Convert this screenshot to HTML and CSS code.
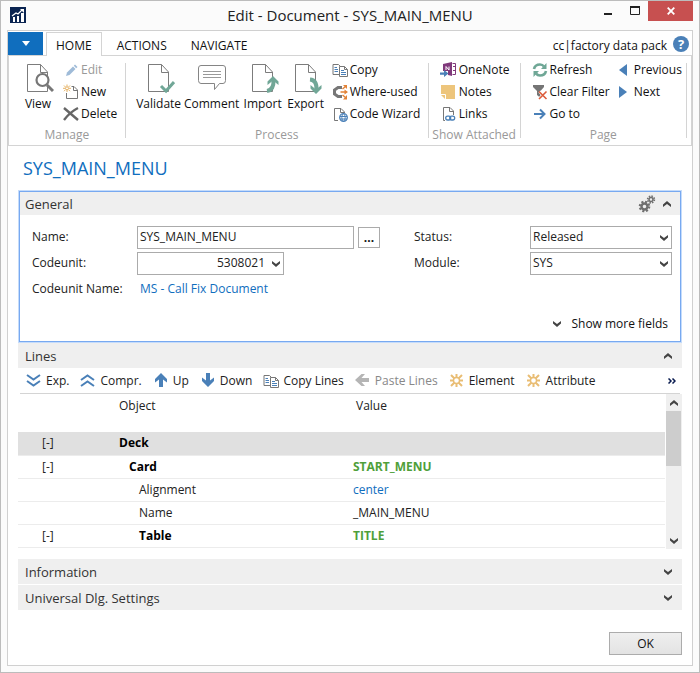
FILE: index.html
```html
<!DOCTYPE html>
<html lang="en">
<head>
<meta charset="utf-8">
<title>Edit - Document - SYS_MAIN_MENU</title>
<link rel="stylesheet" href="styles.css">
</head>
<body>
<svg class="defs" aria-hidden="true">
  <symbol id="doc" viewBox="0 0 32 32"><path d="M5.5 2.500H18.500L25.500 10V29.500H5.500ZM18.500 2.500V10.500H25.500" fill="#fff" stroke="#7c7c7c"/></symbol>
  <symbol id="copy" viewBox="0 0 16 16"><path d="M1 2.500H6.500L9 5V12.500H1Z" fill="#fff" stroke="#777"/><path d="M2.500 5.500H5M2.500 7.500H6M2.500 9.500H6" stroke="#4a80b8"/><path d="M7.500 4.500H12.500L15.500 7.500V14.500H7.500Z" fill="#fff" stroke="#777"/><path d="M12.500 4.500V7.500H15.500" fill="none" stroke="#777"/><path d="M9 8.500H12M9 10.500H14M9 12.500H14" stroke="#4a80b8"/></symbol>
  <symbol id="down" viewBox="0 0 8 6"><path d="M0 0L4 3L8 0V2.500L4 6L0 2.500Z" fill="#444"/></symbol>
  <symbol id="up" viewBox="0 0 8 6"><path d="M0 6L4 3L8 6V3.500L4 0L0 3.500Z" fill="#444"/></symbol>
  <symbol id="burst" viewBox="0 0 16 16"><path d="M7.500 1V5M7.500 10V14M1 7.500H5M10 7.500H14M2 2L5.500 5.500M13 2L9.500 5.500M2 13L5.500 9.500M13 13L9.500 9.500" stroke="#e9bd74" stroke-width="2"/><circle cx="7.500" cy="7.500" r="3" fill="#fff" stroke="#e9bd74" stroke-width="1.400"/></symbol>
</svg>
<div class="window">
  <header class="titlebar">
    <svg class="app-icon" viewBox="0 0 16 16"><path d="M0 0H16V16H0Z" fill="#0a2451"/><path d="M3 10H5V15H3ZM7 9H9V15H7ZM11 6H14V15H11Z" fill="#fff"/><path d="M2 9L6 6L8 7L12 3" fill="none" stroke="#fff" stroke-width="1.200"/><path d="M10 2H14V6Z" fill="#fff"/></svg>
    <h1>Edit - Document - SYS_MAIN_MENU</h1>
    <div class="window-buttons">
      <button aria-label="Minimize"><svg width="10" height="10" viewBox="0 0 10 10"><path d="M1 7H9V9H1Z" fill="#222"/></svg></button>
      <button aria-label="Maximize"><svg width="10" height="10" viewBox="0 0 10 10"><path d="M.5 1H9.500V8.500H.5Z" fill="none" stroke="#222"/><path d="M0 0H10V2H0Z" fill="#222"/></svg></button>
      <button class="close" aria-label="Close"><svg width="8" height="8" viewBox="0 0 8 8"><path d="M.7 .7L7.300 7.300M7.300 .7L.7 7.300" stroke="#fff" stroke-width="1.800"/></svg></button>
    </div>
  </header>
  <main class="frame">
    <nav class="tabs">
      <button class="file" aria-label="File menu"><svg width="8" height="5" viewBox="0 0 8 5"><path d="M0 0H8L4 5Z" fill="#fff"/></svg></button>
      <button class="tab active">HOME</button>
      <button class="tab">ACTIONS</button>
      <button class="tab">NAVIGATE</button>
      <span class="company">cc|factory data pack</span>
      <button class="help" aria-label="Help">?</button>
    </nav>
    <section class="ribbon">
      <div class="group manage">
        <div class="commands">
          <button class="big"><svg viewBox="0 0 32 32"><use href="#doc"/><circle cx="20.500" cy="18" r="6" fill="#fff" stroke="#777" stroke-width="2.200"/><path d="M25 23L31 29" stroke="#777" stroke-width="3"/></svg>View</button>
          <div class="stack">
            <button disabled><svg viewBox="0 0 16 16"><path d="M3 14L4 10.500L10 4.500L12.500 7L6.500 13Z" fill="#9fbbd8"/><path d="M10.800 3.800L12 2.500L14.500 5L13.200 6.200Z" fill="#9fbbd8"/></svg>Edit</button>
            <button><svg viewBox="0 0 16 16"><path d="M8.500 2.500H11L14.500 6V14.500H3.500V9" fill="none" stroke="#777"/><path d="M10.500 2.500V6.500H14.500" fill="none" stroke="#777"/><path d="M4 .5V2.500M4 6V8M0 4.300H2.300M5.800 4.300H8M1 1.500L2.500 3M7 1.500L5.500 3M1 7.200L2.500 5.700M7 7.200L5.500 5.700" stroke="#e6b366"/><circle cx="4" cy="4.300" r="1.500" fill="none" stroke="#e6b366"/></svg>New</button>
            <button><svg viewBox="0 0 16 16"><path d="M1 2L15 14M15 2Q7 6 1 14" fill="none" stroke="#666" stroke-width="2.400"/></svg>Delete</button>
          </div>
        </div>
        <h2>Manage</h2>
      </div>
      <div class="sep"></div>
      <div class="group process">
        <div class="commands">
          <button class="big w48"><svg viewBox="0 0 32 32"><use href="#doc"/><path d="M18 24L23 29L31 20" fill="none" stroke="#71a797" stroke-width="3"/></svg>Validate</button>
          <button class="big w58"><svg viewBox="0 0 32 32"><path d="M5 3.500H27Q29.500 3.500 29.500 6V18.500Q29.500 21.500 27 21.500H23.500L18.500 27.500V21.500H5Q2.500 21.500 2.500 18.500V6Q2.500 3.500 5 3.500Z" fill="#fff" stroke="#858585"/><path d="M7 9.500H25M7 12.500H25M7 15.500H25" stroke="#999"/></svg>Comment</button>
          <button class="big w44"><svg viewBox="0 0 32 32"><use href="#doc"/><path d="M20 29Q27 28 26.500 18" fill="none" stroke="#71a797" stroke-width="4"/><path d="M26 14L31.500 19.500V23L26 18.500L20.500 23V19.500Z" fill="#71a797"/></svg>Import</button>
          <button class="big w42"><svg viewBox="0 0 32 32"><use href="#doc"/><path d="M20 17.500Q27 18 26.500 28" fill="none" stroke="#71a797" stroke-width="4"/><path d="M26 32L31.500 26.500V23L26 27.500L20.500 23V26.500Z" fill="#71a797"/></svg>Export</button>
          <div class="stack">
            <button><svg viewBox="0 0 16 16"><use href="#copy"/></svg>Copy</button>
            <button><svg viewBox="0 0 16 16"><path d="M10 3.500H6L2.500 6V10L6 12.500H10" fill="none" stroke="#777" stroke-width="3"/><path d="M8.500 8H14M10.500 5L13.500 2.500M10.500 11L13.500 13.500" stroke="#e38235" stroke-width="1.400"/><path d="M11 1H15V5ZM12.500 5.500L16 8L12.500 10.500ZM15 11V15.500H11Z" fill="#e38235"/></svg>Where-used</button>
            <button><svg viewBox="0 0 16 16"><path d="M6 14.500H2.500V2.500H9L12.500 6V7" fill="none" stroke="#777"/><path d="M8.500 2.500V6.500H12" fill="none" stroke="#777"/><circle cx="11.500" cy="11.500" r="3.800" fill="#fff" stroke="#4a80b8" stroke-width="1.300"/><path d="M8 10.500H15M8 13H15" stroke="#4a80b8"/><ellipse cx="11.500" cy="11.500" rx="1.700" ry="3.600" fill="none" stroke="#4a80b8"/></svg>Code Wizard</button>
          </div>
        </div>
        <h2>Process</h2>
      </div>
      <div class="sep"></div>
      <div class="group attached">
        <div class="commands">
          <div class="stack">
            <button><svg viewBox="0 0 16 16"><path d="M3 2L12 0V14L8 13V9H3Z" fill="#80397b"/><path d="M6 8V4.500L9 8V4.500" fill="none" stroke="#fff"/><path d="M12.500 1.500H15.500V12.500H12.500" fill="none" stroke="#80397b"/><path d="M13 4.500H15M13 8.500H15" stroke="#80397b"/><path d="M0 10.500H4V8L8.500 11.500L4 15V12.700H0Z" fill="#4a80b8"/></svg>OneNote</button>
            <button><svg viewBox="0 0 16 16"><path d="M1 1H15V15H6L1 10Z" fill="#edc57c"/><path d="M1 11H5V15Z" fill="#edc57c"/><path d="M1 10.500H5.500V15" fill="none" stroke="#fff"/></svg>Notes</button>
            <button><svg viewBox="0 0 16 16"><path d="M5 14.500H3.500V1.500H10L13.500 5V9" fill="none" stroke="#777"/><path d="M9.500 1.500V5.500H13" fill="none" stroke="#777"/><rect x="5.700" y="10.200" width="5" height="3.800" rx="1.900" fill="#fff" stroke="#4a80b8" stroke-width="1.300"/><rect x="9.700" y="10.200" width="5" height="3.800" rx="1.900" fill="none" stroke="#4a80b8" stroke-width="1.300"/></svg>Links</button>
          </div>
        </div>
        <h2>Show Attached</h2>
      </div>
      <div class="sep"></div>
      <div class="group page">
        <div class="commands">
          <div class="stack">
            <button><svg viewBox="0 0 16 16"><path d="M2 7Q3 2.500 8 2.500Q10.500 2.500 12 4.500M14 9Q13 13.500 8 13.500Q5.500 13.500 4 11.500" fill="none" stroke="#6fa796" stroke-width="2.600"/><path d="M14.500 1V7H9ZM1.500 15V9H7Z" fill="#6fa796"/></svg>Refresh</button>
            <button><svg viewBox="0 0 16 16"><path d="M1 1H12V3L8.500 7V14L5 11V7L1 3Z" fill="#757575"/><path d="M7.500 7.500L14.500 14.500M14.500 7.500L7.500 14.500" stroke="#fff" stroke-width="3"/><path d="M7 7.500L14.500 15M14.500 7.500L7 15" stroke="#dc5c3a" stroke-width="1.600"/></svg>Clear Filter</button>
            <button><svg viewBox="0 0 16 16"><path d="M2 8H12M8 3.500L12.500 8L8 12.500" fill="none" stroke="#4a80b8" stroke-width="2"/></svg>Go to</button>
          </div>
          <div class="stack nav">
            <button><svg viewBox="0 0 16 16"><path d="M11 2V14L3 8Z" fill="#4a80b8"/></svg>Previous</button>
            <button><svg viewBox="0 0 16 16"><path d="M3 2V14L11 8Z" fill="#4a80b8"/></svg>Next</button>
          </div>
        </div>
        <h2>Page</h2>
      </div>
      <div class="sep"></div>
    </section>

    <div class="content">
      <h2 class="record-title">SYS_MAIN_MENU</h2>
      <section class="general">
        <header class="bar">
          <h3>General</h3>
          <button aria-label="Customize"><svg width="18" height="18" viewBox="0 0 18 18"><g fill="none" stroke="#707070"><circle cx="6.500" cy="11.500" r="3" stroke-width="2.400"/><circle cx="6.500" cy="11.500" r="4.700" stroke-width="2.200" stroke-dasharray="2 1.690"/><circle cx="13" cy="4.500" r="2" stroke-width="1.600"/><circle cx="13" cy="4.500" r="3.400" stroke-width="1.600" stroke-dasharray="1.500 1.170"/></g></svg></button>
          <button aria-label="Collapse General"><svg class="chev"><use href="#up"/></svg></button>
        </header>
        <form class="fields">
          <label for="name">Name:</label>
          <div class="lookup"><input id="name" value="SYS_MAIN_MENU"><button type="button" aria-label="Look up name">...</button></div>
          <label class="second" for="status">Status:</label>
          <div class="select"><select id="status"><option>Released</option></select><svg class="chev"><use href="#down"/></svg></div>
          <label for="codeunit">Codeunit:</label>
          <div class="select number"><select id="codeunit"><option>5308021</option></select><svg class="chev"><use href="#down"/></svg></div>
          <label class="second" for="module">Module:</label>
          <div class="select"><select id="module"><option>SYS</option></select><svg class="chev"><use href="#down"/></svg></div>
          <span>Codeunit Name:</span>
          <a href="#">MS - Call Fix Document</a>
        </form>
        <button class="more"><svg class="chev"><use href="#down"/></svg>Show more fields</button>
      </section>

      <section class="lines">
        <header class="bar"><h3>Lines</h3><button aria-label="Collapse Lines"><svg class="chev"><use href="#up"/></svg></button></header>
        <div class="toolbar">
          <button><svg viewBox="0 0 16 16"><path d="M1 2L7.500 6.500L14 2M1 8L7.500 12.500L14 8" fill="none" stroke="#4a80b8" stroke-width="2"/></svg>Exp.</button>
          <button><svg viewBox="0 0 16 16"><path d="M1 7L7.500 2.500L14 7M1 13L7.500 8.500L14 13" fill="none" stroke="#4a80b8" stroke-width="2"/></svg>Compr.</button>
          <button><svg viewBox="0 0 16 16"><path d="M8 0L14 6V9.500L10 6.500V14H6V6.500L2 9.500V6Z" fill="#4a80b8"/></svg>Up</button>
          <button><svg viewBox="0 0 16 16"><path d="M8 14L14 8V4.500L10 7.500V0H6V7.500L2 4.500V8Z" fill="#4a80b8"/></svg>Down</button>
          <button><svg viewBox="0 0 16 16"><use href="#copy"/></svg>Copy Lines</button>
          <button disabled><svg viewBox="0 0 16 16"><path d="M0 7L6.500 1H10L6.500 5H14V9H6.500L10 13H6.500Z" fill="#b5b5b5"/></svg>Paste Lines</button>
          <button><svg viewBox="0 0 16 16"><use href="#burst"/></svg>Element</button>
          <button><svg viewBox="0 0 16 16"><use href="#burst"/></svg>Attribute</button>
          <button class="overflow" aria-label="More actions"><svg width="8" height="6" viewBox="0 0 8 6"><path d="M.5 .5L3 3L.5 5.500M4.500 .5L7 3L4.500 5.500" fill="none" stroke="#0a1c50" stroke-width="1.500"/></svg></button>
        </div>
        <div class="grid">
          <table>
            <thead><tr><th class="tree"></th><th class="object">Object</th><th class="head-value">Value</th></tr></thead>
            <tbody>
              <tr class="selected"><td class="tree">[-]</td><td><b>Deck</b></td><td></td></tr>
              <tr><td class="tree">[-]</td><td class="level1"><b>Card</b></td><td><b class="green">START_MENU</b></td></tr>
              <tr><td></td><td class="level2">Alignment</td><td class="blue">center</td></tr>
              <tr><td></td><td class="level2">Name</td><td>_MAIN_MENU</td></tr>
              <tr><td class="tree">[-]</td><td class="level2"><b>Table</b></td><td><b class="green">TITLE</b></td></tr>
            </tbody>
          </table>
          <div class="scrollbar">
            <button aria-label="Scroll up"><svg class="chev"><use href="#up"/></svg></button>
            <div class="thumb"></div>
            <button aria-label="Scroll down"><svg class="chev"><use href="#down"/></svg></button>
          </div>
        </div>
      </section>
      <section class="bar"><h3>Information</h3><button aria-label="Expand Information"><svg class="chev"><use href="#down"/></svg></button></section>
      <section class="bar last"><h3>Universal Dlg. Settings</h3><button aria-label="Expand Universal Dlg. Settings"><svg class="chev"><use href="#down"/></svg></button></section>
      <footer><button class="ok">OK</button></footer>
    </div>
  </main>
</div>
</body>
</html>
```
FILE: styles.css
```css
* { box-sizing: border-box; }
body {
  margin: 0;
  font: 12px/16px "Open Sans", "Noto Sans", sans-serif;
  color: #222;
}
h1, h2, h3 { margin: 0; font-weight: 400; }
button, input, select { font: inherit; color: inherit; margin: 0; }
button { padding: 0; border: 0; background: none; }
button svg { flex: none; }
a { text-decoration: none; }
.defs { position: absolute; width: 0; height: 0; }
.chev { display: block; width: 8px; height: 6px; }

.window {
  min-height: 100vh;
  display: flex;
  flex-direction: column;
  padding: 0 6px 6px;
  border: 1px solid #bcbcbc;
  background: #fbfbfb;
}
.titlebar {
  display: grid;
  grid-template-columns: 92px 1fr 92px;
  height: 29px;
}
.app-icon { width: 16px; height: 16px; margin: 6px 0 0 3px; }
.titlebar h1 { font-size: 15px; line-height: 29px; text-align: center; }
.window-buttons { display: flex; justify-content: flex-end; height: 20px; }
.window-buttons button {
  width: 27px;
  flex: none;
  display: flex;
  align-items: center;
  justify-content: center;
}
.window-buttons .close { width: 45px; background: #c75050; }

.frame {
  flex: 1;
  border: 1px solid #d0d0d0;
  background: #fff;
}
.tabs {
  display: flex;
  height: 25px;
  padding-top: 1px;
  border-bottom: 1px solid #d4d4d4;
}
.file { width: 35px; margin-right: 3px; background: #106ebe; color: #fff; }
.file svg { display: block; margin: 0 auto; }
.tab { padding: 4px 9px 0; margin-right: 6px; color: #111; }
.tab.active {
  margin-bottom: -1px;
  border: 1px solid #d4d4d4;
  border-bottom: 0;
  background: #fff;
  padding-top: 2px;
}
.company { margin-left: auto; padding: 6px 6px 0 0; color: #111; }
.help {
  width: 16px;
  height: 16px;
  margin: 4px 3px 0 0;
  border-radius: 50%;
  background: #4a80b8;
  color: #fff;
  font-weight: 700;
  font-size: 13px;
  line-height: 16px;
}

.ribbon {
  display: flex;
  height: 90px;
  padding: 3px 4px 0 0;
  border: 1px solid #d4d4d4;
  border-top: 0;
}
.sep { width: 1px; margin: 4px 0 7px; background: #d4d4d4; }
.commands { display: flex; height: 66px; }
.group h2 { font-size: 12px; line-height: 20px; text-align: center; color: #999; }
.manage { flex: 116 1 0; }
.process { flex: 303 1 0; }
.attached { flex: 91 1 0; }
.page { flex: 166 1 0; }
.big {
  display: flex;
  flex-direction: column;
  align-items: center;
  padding-top: 3px;
  color: #111;
}
.big svg { width: 32px; height: 32px; margin-bottom: 2px; }
.manage .commands { padding-left: 13px; gap: 9px; }
.process .commands { padding-left: 9px; }
.process .stack { margin-left: 5px; }
.attached .commands { padding-left: 11px; }
.attached .stack button { gap: 3px; }
.page .commands { padding-left: 11px; }
.page .nav { margin-left: 6px; }
.w48 { width: 48px; }
.w58 { width: 58px; }
.w44 { width: 44px; }
.w42 { width: 42px; }
.stack button {
  display: flex;
  align-items: center;
  gap: 2px;
  height: 22px;
  white-space: nowrap;
  color: #111;
}
.stack svg { width: 16px; height: 16px; }
.stack button:disabled { color: #999; }

.content { padding: 0 10px 10px; }
.record-title { padding: 10px 0 11px 5px; font-size: 18px; line-height: 24px; color: #106ebe; }
.bar {
  display: flex;
  align-items: center;
  height: 25px;
  padding: 0 10px 0 7px;
  background: #efefef;
}
.bar h3 { flex: 1; font-size: 13px; line-height: 18px; color: #333; }
.general {
  padding-bottom: 7px;
  border: 1px solid #78a9f0;
  outline: 1px solid #c5dcfb;
  margin: 0 1px 1px;
}
.general .bar { height: 23px; padding: 0 9px 0 5px; gap: 7px; }
.bar button svg { display: block; }
.fields {
  display: grid;
  grid-template-columns: 105px minmax(0, 243fr) 34px 116px minmax(0, 142fr);
  grid-auto-rows: 23px;
  row-gap: 3px;
  padding: 11px 8px 0 12px;
}
.fields label, .fields > span { line-height: 21px; }
.second { grid-column: 4; }
.fields a { line-height: 21px; padding-left: 3px; color: #106ebe; }
.fields input, .fields select {
  width: 100%;
  height: 23px;
  padding: 0 2px 2px;
  border: 1px solid #ababab;
  border-radius: 0;
  background: #fff;
  appearance: none;
}
.lookup { display: flex; gap: 4px; }
.lookup input { flex: 1; min-width: 0; }
.lookup button {
  width: 22px;
  height: 21px;
  margin-top: 1px;
  border: 1px solid #ababab;
  font-weight: 700;
  color: #111;
}
.select { display: grid; align-items: center; }
.select > * { grid-area: 1 / 1; }
.select .chev { justify-self: end; margin-right: 4px; pointer-events: none; }
.number { width: 147px; }
.number select { padding-right: 18px; text-align-last: right; }
.more {
  display: flex;
  align-items: center;
  gap: 10px;
  margin: 13px 12px 0 auto;
  line-height: 20px;
  color: #111;
}

.toolbar {
  display: flex;
  align-items: center;
  height: 26px;
  margin: 0 2px;
  padding: 0 4px 0 6px;
  border-bottom: 1px solid #d4d4d4;
}
.toolbar button { display: flex; align-items: center; gap: 4px; margin-right: 11px; white-space: nowrap; }
.toolbar button svg { width: 16px; height: 16px; }
.toolbar button:disabled { color: #888; }
.toolbar .overflow { margin: 0 0 0 auto; }
.toolbar .overflow svg { width: 8px; height: 6px; }
.grid { display: flex; height: 155px; margin-bottom: 10px; }
table {
  flex: 1;
  align-self: flex-start;
  table-layout: fixed;
  border-collapse: collapse;
}
th { height: 38px; padding: 4px 0 0; font-weight: 400; text-align: left; vertical-align: top; }
td { height: 23px; padding: 0; border-bottom: 1px solid #ececec; line-height: 16px; }
th.tree { width: 101px; }
td.tree { padding-left: 24px; }
th.object { width: 234px; }
.head-value { padding-left: 3px; }
.level1 { padding-left: 10px; }
.level2 { padding-left: 20px; }
.selected { background: #e0e0e0; }
b { color: #000; }
.green { color: #4f9f3a; }
.blue { color: #106ebe; }
.scrollbar { display: flex; flex-direction: column; width: 16px; margin-left: 1px; background: #efefef; }
.scrollbar button { display: flex; align-items: center; justify-content: center; height: 17px; }
.scrollbar button:last-child { margin-top: auto; }
.thumb { height: 55px; background: #cdcdcd; margin-right: 1px; }
.last { margin-top: 1px; }
footer { display: flex; justify-content: flex-end; margin-top: 22px; }
.ok {
  width: 73px;
  height: 23px;
  border: 1px solid #acacac;
  background: linear-gradient(#efefef, #e3e3e3);
  color: #111;
}
```
